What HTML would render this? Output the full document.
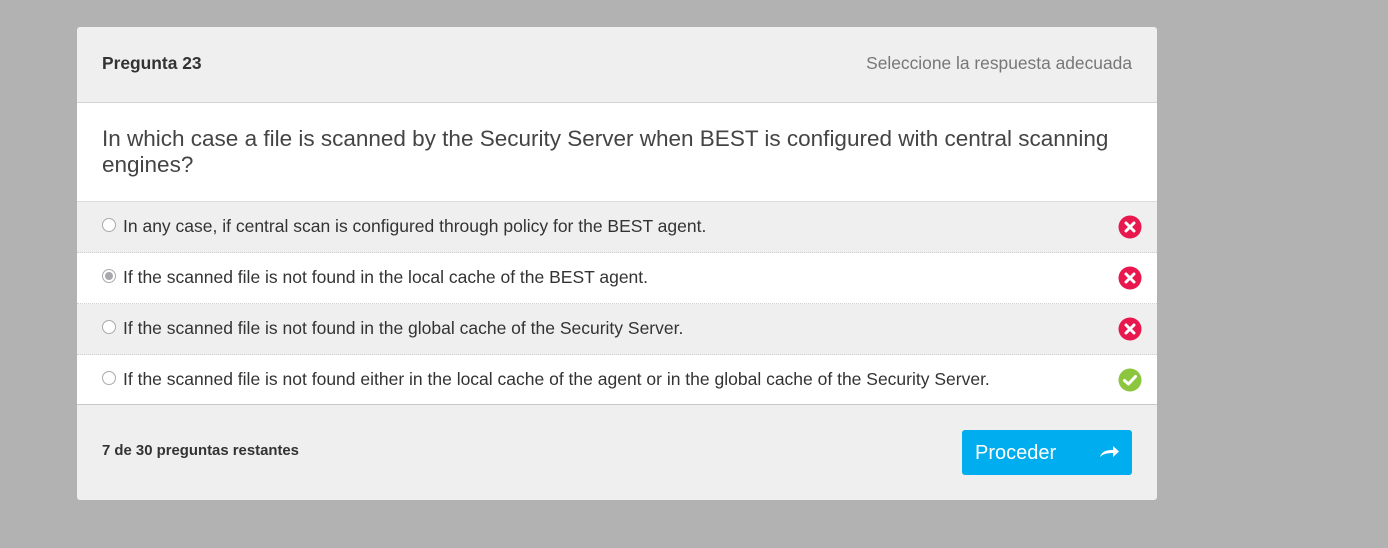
<!DOCTYPE html>
<html><head><meta charset="utf-8"><style>
body{margin:0;width:1388px;height:548px;background:#b2b2b2;font-family:"Liberation Sans",Arial,sans-serif;overflow:hidden}
.card{position:absolute;left:77px;top:27px;width:1080px;height:473px;background:#efefef;border-radius:3px;overflow:hidden}
.hdr{height:75px;border-bottom:1px solid #d4d4d4;position:relative}
.hdr .t{position:absolute;left:25px;top:26px;font-size:17.4px;font-weight:bold;color:#333}
.hdr .r{position:absolute;right:25px;top:26px;font-size:17.4px;color:#777}
.q{background:#fff;height:99px;border-bottom:1px solid #ddd;box-sizing:border-box;padding:23px 25px 0;font-size:22.5px;line-height:26px;color:#444}
.row{height:50px;position:relative;border-bottom:1px dotted #d0d0d0;font-size:17.5px;color:#333}
.row.g{background:#efefef}.row.w{background:#fff}
.row .rad{position:absolute;left:25px;top:16px;width:12px;height:12px;border:1px solid #aaa;border-radius:50%;background:#fff}
.row .rad.s::after{content:"";position:absolute;left:2px;top:2px;width:8px;height:8px;border-radius:50%;background:#a8a8ad}
.row .tx{position:absolute;left:46px;top:14px}
.row svg{position:absolute;left:1041px;top:13px}
.foot{border-top:1px solid #c8c8c8;position:absolute;top:377px;left:0;right:0;bottom:0}
.foot .l{position:absolute;left:25px;top:38px;font-size:14.9px;font-weight:bold;color:#333}
.btn{position:absolute;left:885px;top:25px;width:170px;height:45px;background:#00adee;border-radius:3px;color:#fff;font-size:20px}
.btn span{position:absolute;left:13px;top:12px}
.btn svg{position:absolute;left:136px;top:14px}
</style></head><body>
<div class="card">
<div class="hdr"><div class="t">Pregunta 23</div><div class="r">Seleccione la respuesta adecuada</div></div>
<div class="q">In which case a file is scanned by the Security Server when BEST is configured with central scanning engines?</div>
<div class="row g"><div class="rad"></div><div class="tx">In any case, if central scan is configured through policy for the BEST agent.</div>
<svg width="24" height="24" viewBox="0 0 24 24"><circle cx="12" cy="12" r="11.5" fill="#e8174d"/><path d="M8 8L16 16M16 8L8 16" stroke="#fff" stroke-width="3" stroke-linecap="round"/></svg></div>
<div class="row w"><div class="rad s"></div><div class="tx">If the scanned file is not found in the local cache of the BEST agent.</div>
<svg width="24" height="24" viewBox="0 0 24 24"><circle cx="12" cy="12" r="11.5" fill="#e8174d"/><path d="M8 8L16 16M16 8L8 16" stroke="#fff" stroke-width="3" stroke-linecap="round"/></svg></div>
<div class="row g"><div class="rad"></div><div class="tx">If the scanned file is not found in the global cache of the Security Server.</div>
<svg width="24" height="24" viewBox="0 0 24 24"><circle cx="12" cy="12" r="11.5" fill="#e8174d"/><path d="M8 8L16 16M16 8L8 16" stroke="#fff" stroke-width="3" stroke-linecap="round"/></svg></div>
<div class="row w" style="border-bottom:none"><div class="rad"></div><div class="tx">If the scanned file is not found either in the local cache of the agent or in the global cache of the Security Server.</div>
<svg width="24" height="24" viewBox="0 0 24 24"><circle cx="12" cy="12" r="11.5" fill="#8cc63f"/><path d="M6.5 12.5L10.5 16L17.5 8.5" stroke="#fff" stroke-width="3" fill="none" stroke-linecap="round" stroke-linejoin="round"/></svg></div>
<div class="foot"><div class="l">7 de 30 preguntas restantes</div>
<div class="btn"><span>Proceder</span><svg width="22" height="16" viewBox="0 0 22 16"><path d="M2 13C4 7 9 6 15 6L15 2L21 7.5L15 13L15 9C9 9 5 10 2 13Z" fill="#fff"/></svg></div></div>
</div>
</body></html>
